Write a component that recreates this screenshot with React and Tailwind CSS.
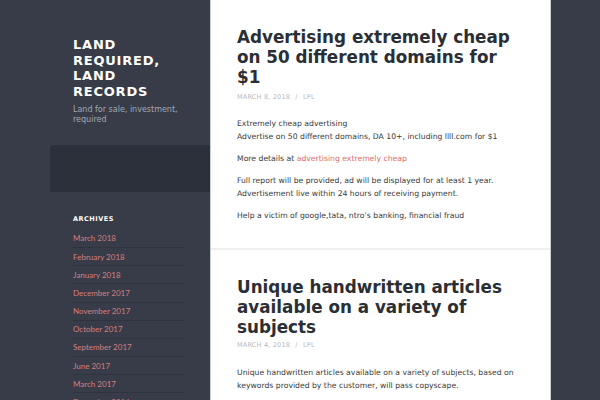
export default function App() {
  const archives = [
    "March 2018",
    "February 2018",
    "January 2018",
    "December 2017",
    "November 2017",
    "October 2017",
    "September 2017",
    "June 2017",
    "March 2017",
    "December 2016",
  ];

  return (
    <div className="flex h-[400px] w-[600px] overflow-hidden bg-[#373c48] font-['DejaVu_Sans',sans-serif]">
      {/* Sidebar */}
      <aside className="w-[210px] shrink-0">
        <div className="pl-[73px] pr-[18px] pt-[37px]">
          <h1 className="text-[13px] font-bold uppercase leading-[15.5px] tracking-[0.06em] text-white">
            Land Required, Land Records
          </h1>
          <p className="mt-[6px] text-[8px] leading-[10px] text-[#a3a8b3]">
            Land for sale, investment, required
          </p>
        </div>
        <div className="ml-[50px] mt-[20px] h-[47px] rounded-l-[3px] bg-[#2b303a]"></div>
        <div className="pl-[73px] pr-[25px] pt-[23px]">
          <h2 className="text-[6.5px] font-bold uppercase tracking-[0.08em] text-white">Archives</h2>
          <ul className="mt-[5px]">
            {archives.map((a) => (
              <li
                key={a}
                className="border-b border-[#2f343f] py-[3.6px] font-['Lato',sans-serif] text-[8px] leading-[10px] text-[#d47f7f]"
              >
                {a}
              </li>
            ))}
          </ul>
        </div>
      </aside>

      {/* Main */}
      <main className="w-[341px] shrink-0 border-x border-[#c9ccd3] bg-white">
        <article className="border-b-2 border-[#efefef] px-[26px] pb-[26px] pt-[27px]">
          <h2 className="text-[16.8px] font-bold leading-[20px] text-[#2a2e35]">
            Advertising extremely cheap on 50 different domains for $1
          </h2>
          <div className="mt-[6px] text-[6.5px] uppercase tracking-[0.03em] text-[#b9b9b9]">
            March 8, 2018 <span className="mx-[3px]">/</span> LPL
          </div>
          <div className="mt-[14px] space-y-[9px] text-[7.7px] leading-[13px] text-[#3a3a3a]">
            <p>
              Extremely cheap advertising
              <br />
              Advertise on 50 different domains, DA 10+, including llll.com for $1
            </p>
            <p>
              More details at <span className="text-[#e06c6c]">advertising extremely cheap</span>
            </p>
            <p>
              Full report will be provided, ad will be displayed for at least 1 year.
              <br />
              Advertisement live within 24 hours of receiving payment.
            </p>
            <p>Help a victim of google,tata, ntro’s banking, financial fraud</p>
          </div>
        </article>
        <article className="px-[26px] pt-[27px]">
          <h2 className="text-[16.8px] font-bold leading-[20px] text-[#2a2e35]">
            Unique handwritten articles available on a variety of subjects
          </h2>
          <div className="mt-[4px] text-[6.5px] uppercase tracking-[0.03em] text-[#b9b9b9]">
            March 4, 2018 <span className="mx-[3px]">/</span> LPL
          </div>
          <div className="mt-[15px] text-[7.7px] leading-[13px] text-[#3a3a3a]">
            <p>
              Unique handwritten articles available on a variety of subjects, based on keywords provided by the customer, will pass copyscape.
            </p>
          </div>
        </article>
      </main>

      <div className="flex-1"></div>
    </div>
  );
}
